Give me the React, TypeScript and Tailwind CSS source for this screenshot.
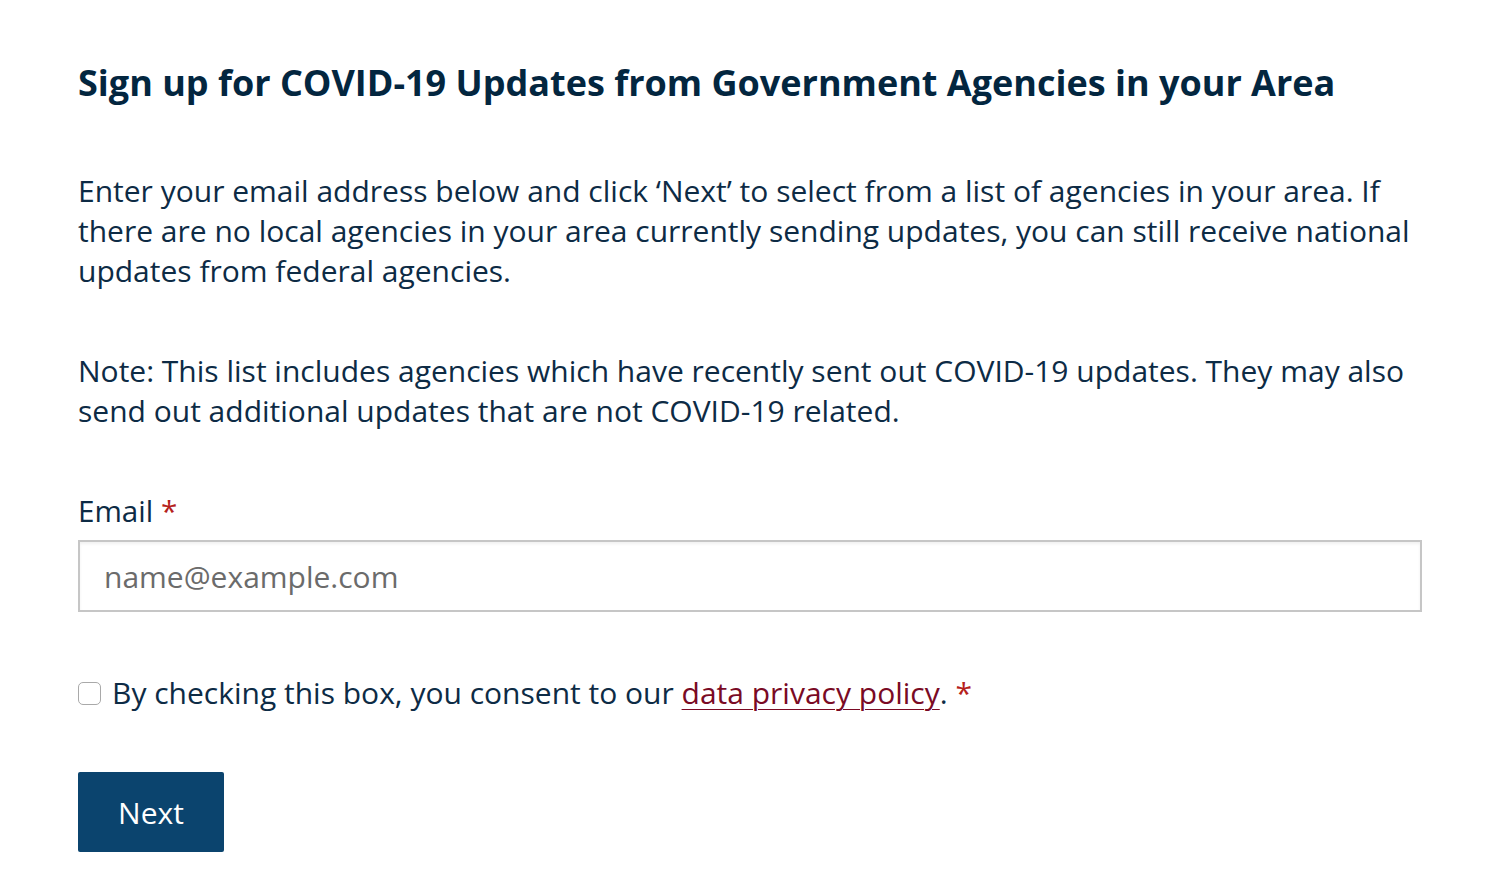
export default function App() {
  return (
    <div
      className="min-h-screen bg-white pl-[78px] pr-[66px] pt-[59px] text-[#0d2b45]"
      style={{ fontFamily: '"Open Sans", "Liberation Sans", sans-serif' }}
    >
      <h1 className="text-[36px] leading-[48px] font-bold text-[#03263f]">
        Sign up for COVID-19 Updates from Government Agencies in your Area
      </h1>

      <p className="mt-[64px] text-[30px] leading-[40px]">
        Enter your email address below and click ‘Next’ to select from a list of agencies in your area. If there are no
        local agencies in your area currently sending updates, you can still receive national updates from federal
        agencies.
      </p>

      <p className="mt-[60px] text-[30px] leading-[40px]">
        Note: This list includes agencies which have recently sent out COVID-19 updates. They may also send out
        additional updates that are not COVID-19 related.
      </p>

      <form className="mt-[60px]" onSubmit={(e) => e.preventDefault()}>
        <label htmlFor="email" className="block text-[29.6px] leading-[40px]">
          Email <span className="text-[#b5211b]">*</span>
        </label>
        <input
          id="email"
          type="email"
          placeholder="name@example.com"
          className="mt-[9px] block h-[72px] w-full border-2 border-[#c6c6c6] px-[24px] text-[30px] text-[#0d2b45] shadow-[inset_0_2px_3px_rgba(0,0,0,0.06)] placeholder:text-[#6b6b6b] focus:outline-none"
        />

        <div className="mt-[61px] flex items-center text-[30px] leading-[40px]">
          <input
            type="checkbox"
            className="mr-[11px] h-[23px] w-[23px] shrink-0 appearance-none rounded-[5px] border border-[#a9a9a9] bg-white"
          />
          <span>
            By checking this box, you consent to our{' '}
            <a href="#" className="text-[#7a0a24] underline decoration-1 underline-offset-[5px]">
              data privacy policy
            </a>
            . <span className="text-[#b5211b]">*</span>
          </span>
        </div>

        <button
          type="submit"
          className="mt-[59px] h-[80px] w-[146px] rounded-[2px] bg-[#0b446e] text-[30px] text-white"
        >
          Next
        </button>
      </form>
    </div>
  );
}
